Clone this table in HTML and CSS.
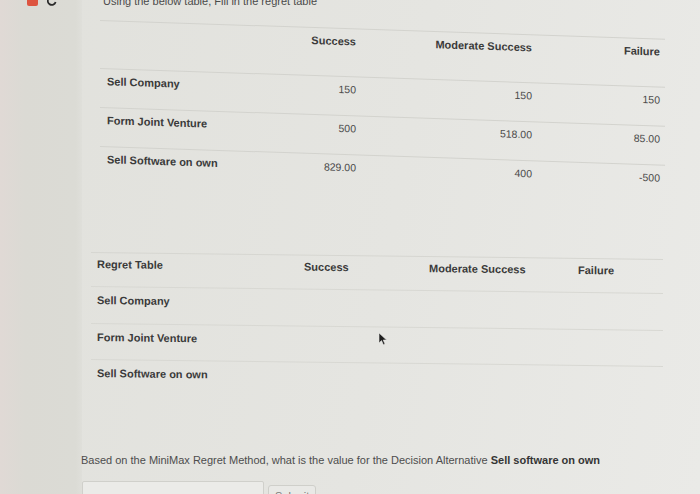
FILE: index.html
```html
<!DOCTYPE html>
<html lang="en">
<head>
<meta charset="utf-8">
<title>Regret Table</title>
<link rel="stylesheet" href="styles.css">
</head>
<body>
<div class="screen">
  <aside class="gutter">
    <span class="badge"></span>
    <svg class="reload" width="10" height="10" viewBox="0 0 10 10"><path d="M8 2.5 A4 4 0 1 0 8.6 6" fill="none" stroke="#2b2b2b" stroke-width="1.8"/></svg>
  </aside>
  <main class="content">
    <p class="intro">Using the below table, Fill in the regret table</p>

    <div class="payoff">
      <div class="row head">
        <span></span><span class="num">Success</span><span class="num">Moderate Success</span><span class="num">Failure</span>
      </div>
      <div class="row">
        <span class="label">Sell Company</span><span class="num val">150</span><span class="num val">150</span><span class="num val">150</span>
      </div>
      <div class="row">
        <span class="label">Form Joint Venture</span><span class="num val">500</span><span class="num val">518.00</span><span class="num val">85.00</span>
      </div>
      <div class="row last">
        <span class="label">Sell Software on own</span><span class="num val">829.00</span><span class="num val">400</span><span class="num val">-500</span>
      </div>
    </div>

    <div class="regret">
      <div class="row head">
        <span class="label">Regret Table</span><span class="label">Success</span><span class="label">Moderate Success</span><span class="label">Failure</span>
      </div>
      <div class="row">
        <span class="label">Sell Company</span><span></span><span></span><span></span>
      </div>
      <div class="row">
        <span class="label">Form Joint Venture</span><span></span><span></span><span></span>
      </div>
      <div class="row last">
        <span class="label">Sell Software on own</span><span></span><span></span><span></span>
      </div>
    </div>

    <p class="question">Based on the MiniMax Regret Method, what is the value for the Decision Alternative <b>Sell software on own</b></p>

    <div class="answer">
      <input class="field" type="text" aria-label="answer">
      <button class="submit" type="button">Submit</button>
    </div>
  </main>
  <svg class="cursor" width="10" height="14" viewBox="0 0 10 14"><path d="M1 1 L1 11 L3.5 8.6 L5.4 12.8 L7 12 L5.2 8 L8.6 8 Z" fill="#1f1f1f" stroke="#e8e8e4" stroke-width="0.6"/></svg>
</div>
</body>
</html>
```

FILE: styles.css
```css
* { box-sizing: border-box; }

html, body {
  margin: 0;
  padding: 0;
}

body {
  width: 700px;
  height: 494px;
  overflow: hidden;
  font-family: "Liberation Sans", Arial, sans-serif;
  font-size: 11px;
  color: #444;
}

.screen {
  position: relative;
  display: flex;
  width: 700px;
  height: 494px;
  background: linear-gradient(100deg, #e1e1dc 0%, #e5e5e1 55%, #eaeae7 100%);
}

.gutter {
  width: 82px;
  flex: none;
  display: flex;
  align-items: flex-start;
  gap: 9px;
  padding-left: 27px;
  background: linear-gradient(90deg, #e0d9d5 0%, #dbdad4 30%, #dbdbd5 92%, #dfdfda 100%);
}

.badge {
  display: block;
  width: 11px;
  height: 6px;
  background: #dd5440;
  border-radius: 0 0 2px 2px;
}

.reload {
  margin-top: -4px;
}

.content {
  flex: 1;
  display: flex;
  flex-direction: column;
  align-items: flex-start;
}

.intro {
  margin: -5px 0 0 21px;
  line-height: 13px;
  height: 13px;
  color: #4a4a4a;
  white-space: nowrap;
}

/* payoff table */
.payoff {
  margin: 12px 0 0 18px;
  width: 565px;
  border-top: 1px solid #d3d3ce;
  transform: skewY(1.9deg);
  transform-origin: left top;
}

.row {
  display: grid;
  align-items: start;
  border-bottom: 1px solid #d3d3ce;
  line-height: 13px;
}

.payoff .row {
  grid-template-columns: 140px 121px 176px 128px;
  height: 39px;
  padding-top: 6px;
}

.payoff .row.head {
  height: 48px;
  padding-top: 6px;
}

.payoff .label {
  padding-left: 7px;
}

.num {
  text-align: right;
  padding-right: 5px;
}

.head span,
.label {
  font-weight: bold;
  color: #3a3a3a;
}

.val {
  color: #4a4a4a;
  font-size: 10.5px;
}

/* regret table */
.regret {
  margin: 66px 0 0 9px;
  width: 572px;
  border-top: 1px solid #d6d6d1;
  transform: skewY(0.7deg);
  transform-origin: left top;
}

.regret .row {
  grid-template-columns: 207px 125px 149px 91px;
  height: 36.5px;
  padding-top: 7px;
  border-bottom-color: #d8d8d3;
}

.regret .row.head {
  height: 34px;
  padding-top: 5px;
}

.regret .label {
  padding-left: 6px;
}

.payoff .row.last,
.regret .row.last {
  border-bottom-color: transparent;
}

.question {
  margin: 57px 0 0 -1px;
  line-height: 13px;
  color: #4d4d4d;
  white-space: nowrap;
}

.question b {
  color: #353535;
}

.answer {
  display: flex;
  align-items: flex-start;
  gap: 4px;
  margin: 14px 0 0 0;
}

.field {
  width: 182px;
  height: 24px;
  margin: 0;
  border: 1px solid #d0d0cb;
  border-radius: 2px;
  background: #ebebe8;
}

.submit {
  margin: 4px 0 0 0;
  padding: 1px 6px;
  height: 22px;
  font-family: "Liberation Sans", Arial, sans-serif;
  font-size: 11px;
  color: #777;
  background: #e9e9e6;
  border: 1px solid #cfcfca;
  border-radius: 3px;
}

.cursor {
  position: absolute;
  left: 378px;
  top: 332px;
}
```
